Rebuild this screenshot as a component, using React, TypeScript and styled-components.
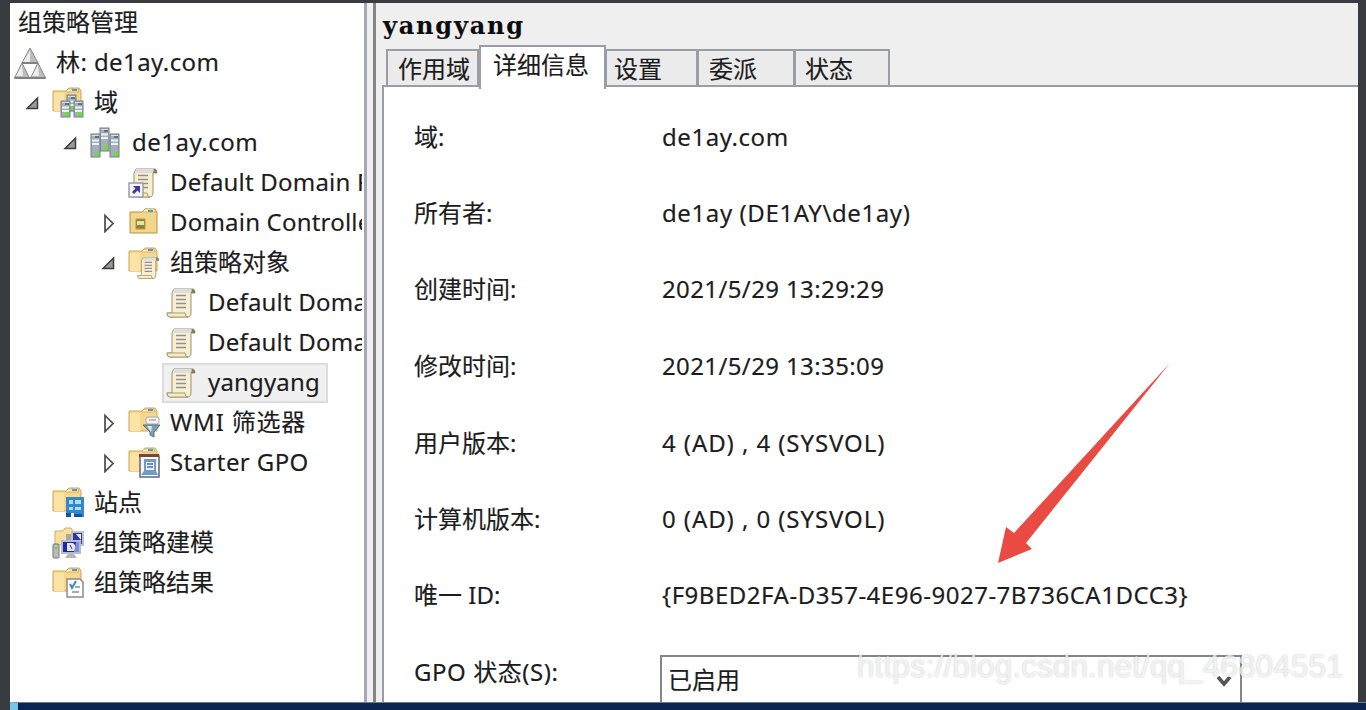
import React from 'react';
import styled, { createGlobalStyle } from 'styled-components';

const Global = createGlobalStyle`
  * { box-sizing: border-box; }
  body { margin: 0; overflow: hidden; background: #383b3f; }
`;

const Desktop = styled.div`
  width: 1366px;
  height: 710px;
  display: flex;
  flex-direction: column;
  padding-top: 3px;
  background: #383b3f;
  color: #1c1c20;
  font: 24px/40px 'Noto Sans', 'Noto Sans CJK SC', sans-serif;
  -webkit-text-stroke: 0.15px currentColor;
  white-space: nowrap;
`;

const Console = styled.main`
  display: flex;
  height: 699px;
  margin: 0 8px 0 10px;
  background: #efefef;
`;

const Taskbar = styled.footer`
  height: 8px;
  margin-left: 10px;
  background: #0a2552;
  border-left: 8px solid #7ac6e6;
  border-top: 1px solid #6f7b8f;
`;

const TreePane = styled.nav`
  width: 354px;
  background: #fff;
  border-right: 2px solid #fff;
  overflow: hidden;
`;

const Splitter = styled.div`
  width: 12px;
  border-left: 3px solid #a6a9b3;
  border-right: 3px solid #858585;
  background: #efefef;
`;

const TreeRow = styled.div<{ $level: number }>`
  height: 40px;
  display: flex;
  align-items: center;
  padding-left: ${p => Math.max(0, p.$level * 38 - 26)}px;
`;

const RootRow = styled.div`
  height: 40px;
  padding-left: 8px;
  line-height: 38px;
`;

const Twisty = styled.span`
  width: 26px;
  height: 20px;
  display: flex;
  flex: none;
`;

const Node = styled.span<{ $selected?: boolean }>`
  height: 40px;
  display: flex;
  align-items: center;
  padding: 0 6px 0 2px;
  border: 2px solid ${p => (p.$selected ? '#dcdcdc' : 'transparent')};
  background: ${p => (p.$selected ? '#f0f0f0' : 'transparent')};
`;

const NodeLabel = styled.span<{ $spacing?: number }>`
  margin-left: 10px;
  line-height: 34px;
  padding-bottom: 2px;
  letter-spacing: ${p => p.$spacing ?? 0}px;
`;

const Details = styled.section`
  flex: 1;
  min-width: 0;
  display: flex;
  flex-direction: column;
  padding-left: 6px;
`;

const Heading = styled.h1`
  height: 42px;
  margin: 0;
  padding-left: 1px;
  font: bold 24px/45px 'DejaVu Serif', serif;
  letter-spacing: 1.8px;
  color: #0c0c0c;
`;

const Tabs = styled.div`
  height: 42px;
  display: flex;
  align-items: flex-end;
  padding-left: 4px;
  position: relative;
  z-index: 1;
`;

const Tab = styled.div<{ $width: number; $active?: boolean; $pad: number }>`
  width: ${p => p.$width}px;
  height: ${p => (p.$active ? 44 : 36)}px;
  margin-bottom: ${p => (p.$active ? -2 : 2)}px;
  padding-left: ${p => p.$pad}px;
  border: 2px solid #9b9da5;
  border-bottom: 0;
  border-left-width: ${p => (p.$active || p.$width === 93 ? 2 : 1)}px;
  background: ${p => (p.$active ? '#fff' : '#ebebeb')};
  line-height: 36px;
`;

const TabPage = styled.div`
  flex: 1;
  margin-top: -2px;
  border: solid #9b9da5;
  border-width: 2px 0 0 2px;
  background: #fff;
  padding: 12px 0 0 30px;
  overflow: hidden;
`;

const Field = styled.div<{ $height: number }>`
  height: ${p => p.$height}px;
  display: grid;
  grid-template-columns: 248px 1fr;
  line-height: 75px;
`;

const Text = styled.span<{ $spacing?: number }>`
  letter-spacing: ${p => p.$spacing ?? 0}px;
`;

const Select = styled.div`
  width: 582px;
  height: 60px;
  margin: 21px 0 0 -2px;
  padding: 0 7px 0 6px;
  border: 2px solid #868686;
  display: flex;
  justify-content: space-between;
  line-height: 46px;
`;

const Chevron = styled.svg`
  margin-top: 15px;
`;

const Arrow = styled.svg`
  position: absolute;
  left: 990px;
  top: 355px;
`;

const Watermark = styled.div`
  position: absolute;
  left: 857px;
  top: 646px;
  font: 31.5px/40px 'Liberation Sans', sans-serif;
  letter-spacing: 0.1px;
  -webkit-text-stroke: 0;
  color: rgba(255, 255, 255, 0.72);
  text-shadow: 0 0 2px rgba(0, 0, 0, 0.24);
`;

const Svg = ({ children }: { children: React.ReactNode }) => (
  <svg width="32" height="32" viewBox="0 0 32 32">{children}</svg>
);

const Folder = () => (
  <g>
    <path d="M1 4h13l3-3h10l2 3v20H1z" fill="#f5d88c" stroke="#cfa557" />
    <path d="M2 6h10v18H2z" fill="#fae3a4" />
    <path d="M14 4l2-2h10l1 3H14z" fill="#fcefcb" stroke="#d9b365" />
    <path d="M20 3h5" stroke="#4e9ad4" strokeWidth="2" />
  </g>
);

const Tower = ({ x, y, h = 18 }: { x: number; y: number; h?: number }) => (
  <g>
    <rect x={x} y={y} width="9" height={h} fill="#a4afb9" stroke="#71808c" />
    <path d={`M${x + 1} ${y + 1.5}h7`} stroke="#d9e1e7" />
    <path d={`M${x + 4} ${y + 3}h4`} stroke="#27333d" />
    <path d={`M${x + 1} ${y + 6.5}h7M${x + 1} ${y + 10}h7`} stroke="#edf2f5" strokeWidth="2" />
    <rect x={x + 4} y={y + h - 5} width="4" height="4" fill="#6be22a" />
  </g>
);

const Scroll = () => (
  <g>
    <path d="M8 2h19q2 0 2 4h-4v19q0 5-3 5H4q-3 0-3-4h5V6z" fill="#f8efcd" stroke="#98917d" />
    <path d="M8 2h17v4H7z" fill="#dedddb" />
    <path d="M26 2q3 0 3 4h-4z" fill="#8c7b50" />
    <path d="M1 26h18q0 4 3 4H4q-3 0-3-4z" fill="#f7edbd" stroke="#a49b7b" />
    <path d="M10 8.500h10M10 12.500h10M10 16.500h10M10 20.500h10" stroke="#928d9d" strokeWidth="1.600" />
  </g>
);

type IconName = 'forest' | 'domains' | 'domain' | 'link' | 'ou' | 'objects' | 'gpo' | 'wmi' | 'starter' | 'sites' | 'modeling' | 'results';

const icons: Record<IconName, React.ReactNode> = {
  forest: (
    <g stroke="#858585" strokeWidth="1">
      <path d="M16 1l8 15H8zM8 16l7.500 15H.5zM24 16l7.500 15h-15z" fill="#bdbdbd" />
      <path d="M16 3l-7 12h7zM8 18L2 29h7zM24 18l-6 11h7z" fill="#ececec" stroke="none" />
      <path d="M8 16h16M.5 31h31" stroke="#808080" strokeWidth="2" />
    </g>
  ),
  domains: <><Folder /><Tower x={15} y={8} h={16} /><Tower x={9} y={14} h={16} /><Tower x={22} y={14} h={16} /></>,
  domain: <><Tower x={10} y={1} h={23} /><Tower x={1} y={7} h={23} /><Tower x={20} y={7} h={23} /></>,
  link: (
    <>
      <Scroll />
      <path d="M1 16h14v14H1z" fill="#f5f5fb" stroke="#9d9da9" strokeWidth="1.500" />
      <path d="M5 19h7v7l-2.500-2.500L6 27l-2-2 3.500-3.500z" fill="#3c3996" />
    </>
  ),
  ou: (
    <>
      <path d="M2 5h12l3-3h10l2 3v21H2z" fill="#f3d68b" stroke="#b8923e" />
      <path d="M15 4l2-2h9l2 3H15z" fill="#fff2cd" stroke="#d9b365" />
      <path d="M20 4h5" stroke="#4e9ad4" strokeWidth="2" />
      <rect x="8" y="12" width="9" height="10" fill="#8c8134" stroke="#b89c45" />
      <path d="M9 14h7v4H9z" fill="#e3e2a7" />
    </>
  ),
  objects: <><Folder /><g transform="translate(9 9) scale(.75)"><Scroll /></g></>,
  gpo: <Scroll />,
  wmi: (
    <>
      <Folder />
      <rect x="18" y="10" width="13" height="7" rx="2" fill="#f3f3f3" stroke="#aaa" />
      <path d="M21 13h7" stroke="#b08078" />
      <path d="M15 18h17l-6 7v5l-4-2v-3z" fill="#7f9fb9" stroke="#54708a" />
      <path d="M19 19h5l-1 6z" fill="#dbe9f2" />
    </>
  ),
  starter: (
    <>
      <Folder />
      <rect x="12" y="9" width="19" height="21" fill="#f4f6f8" stroke="#606872" strokeWidth="1.500" />
      <path d="M11 8.500h20" stroke="#7c4436" strokeWidth="3" />
      <path d="M16 12h12v12l2 4H13l3-4z" fill="#7299c8" />
      <path d="M18 15h8v8h-8z" fill="#e8f2fc" />
      <path d="M19 17h6M19 20h6" stroke="#456fa9" strokeWidth="1.500" />
    </>
  ),
  sites: (
    <>
      <Folder />
      <path d="M14 10h18v20H14z" fill="#3588c8" />
      <path d="M17 13h4v4h-4zM23 13h6v4h-6zM17 20h4v3h-4zM23 20h6v3h-6z" fill="#a9dcf5" />
      <path d="M14 26h5v4h-5zM22 27h8v3h-8z" fill="#1150aa" />
      <path d="M19 26h3v4h-3z" fill="#f4f9fd" />
    </>
  ),
  modeling: (
    <>
      <path d="M3 4h8l2-3h6l2 3v14H3z" fill="#f7df9c" stroke="#d1ae61" />
      <path d="M20 5h11v13H20z" fill="#2e3aa2" stroke="#bfc2ca" strokeWidth="2" />
      <path d="M24 7l5 6v-6z" fill="#e8ecfa" />
      <path d="M14 7h5v8h-5z" fill="#a7aaa3" />
      <path d="M10 14h18v12H10z" fill="#1b27ad" stroke="#b8bcc8" strokeWidth="2" />
      <path d="M15 16h6l2 2v6h-8z" fill="#e5e7ee" />
      <path d="M18 18l2 4" stroke="#30364d" fill="none" />
      <path d="M24 15h3v10h-5z" fill="#7d8be0" />
      <path d="M16 27h6l3 4H13z" fill="#b6b6b6" />
      <rect x="1" y="17" width="6" height="14" rx="1" fill="#b9bbb9" stroke="#777" />
      <path d="M2.500 21h3" stroke="#72d52c" strokeWidth="2" />
    </>
  ),
  results: (
    <>
      <Folder />
      <path d="M15 12h13l3 3v15H15z" fill="#fff" stroke="#8a8a8a" strokeWidth="1.500" />
      <path d="M18 17l2 4 4-7" fill="none" stroke="#3787c4" strokeWidth="2" />
      <path d="M23 20h5M20 25h7" stroke="#8c8c98" strokeWidth="1.500" />
    </>
  ),
};

type Item = { label: string; level: number; icon: IconName; state?: 'open' | 'closed'; selected?: boolean; spacing?: number };

const items: Item[] = [
  { label: '林: de1ay.com', level: 0, icon: 'forest', spacing: 0.42 },
  { label: '域', level: 1, icon: 'domains', state: 'open' },
  { label: 'de1ay.com', level: 2, icon: 'domain', state: 'open', spacing: 0.5 },
  { label: 'Default Domain Policy', level: 3, icon: 'link', spacing: 0.2 },
  { label: 'Domain Controllers', level: 3, icon: 'ou', state: 'closed', spacing: 0.2 },
  { label: '组策略对象', level: 3, icon: 'objects', state: 'open' },
  { label: 'Default Domain Controllers Policy', level: 4, icon: 'gpo', spacing: 0.2 },
  { label: 'Default Domain Policy', level: 4, icon: 'gpo', spacing: 0.2 },
  { label: 'yangyang', level: 4, icon: 'gpo', selected: true, spacing: 0.15 },
  { label: 'WMI 筛选器', level: 3, icon: 'wmi', state: 'closed', spacing: 0.8 },
  { label: 'Starter GPO', level: 3, icon: 'starter', state: 'closed', spacing: 0.4 },
  { label: '站点', level: 1, icon: 'sites' },
  { label: '组策略建模', level: 1, icon: 'modeling' },
  { label: '组策略结果', level: 1, icon: 'results' },
];

const fields: [string, string, number, number][] = [
  ['域:', 'de1ay.com', 76, 0.55],
  ['所有者:', 'de1ay (DE1AY\\de1ay)', 76, 0.6],
  ['创建时间:', '2021/5/29 13:29:29', 77, 0.38],
  ['修改时间:', '2021/5/29 13:35:09', 77, 0.38],
  ['用户版本:', '4 (AD) , 4 (SYSVOL)', 76, 0.92],
  ['计算机版本:', '0 (AD) , 0 (SYSVOL)', 76, 0.92],
  ['唯一 ID:', '{F9BED2FA-D357-4E96-9027-7B736CA1DCC3}', 77, 0.51],
];

export default function App() {
  return (
    <Desktop>
      <Global />
      <Console>
        <TreePane>
          <RootRow>组策略管理</RootRow>
          {items.map((item, i) => (
            <TreeRow key={i} $level={item.level}>
              {item.level > 0 && (
                <Twisty>
                  {item.state && (
                    <svg width="20" height="20" viewBox="0 0 20 20">
                      {item.state === 'open'
                        ? <path d="M15.500 5v10.500h-10.500z" fill="#999" stroke="#3c3c3c" strokeWidth="1.500" />
                        : <path d="M7 2.500v16l8-8z" fill="#fff" stroke="#4b4b4b" strokeWidth="1.700" />}
                    </svg>
                  )}
                </Twisty>
              )}
              <Node $selected={item.selected}>
                <Svg>{icons[item.icon]}</Svg>
                <NodeLabel $spacing={item.spacing}>{item.label}</NodeLabel>
              </Node>
            </TreeRow>
          ))}
        </TreePane>
        <Splitter />
        <Details>
          <Heading>yangyang</Heading>
          <Tabs>
            <Tab $width={93} $pad={10}>作用域</Tab>
            <Tab $width={127} $pad={12} $active>详细信息</Tab>
            <Tab $width={92} $pad={7}>设置</Tab>
            <Tab $width={97} $pad={10}>委派</Tab>
            <Tab $width={95} $pad={9}>状态</Tab>
          </Tabs>
          <TabPage>
            {fields.map(([label, value, height, spacing]) => (
              <Field key={label} $height={height}>
                <Text>{label}</Text>
                <Text $spacing={spacing}>{value}</Text>
              </Field>
            ))}
            <Field $height={80}>
              <Text $spacing={0.55}>GPO 状态(S):</Text>
              <Select>
                <Text>已启用</Text>
                <Chevron width="18" height="18" viewBox="0 0 18 18">
                  <path d="M3 5l6 7 6-7" fill="none" stroke="#555" strokeWidth="3.500" />
                </Chevron>
              </Select>
            </Field>
          </TabPage>
        </Details>
      </Console>
      <Taskbar />
      <Arrow width="190" height="215" viewBox="0 0 190 215">
        <path d="M180 8L24 178l-8-6-8 36 34-14-6-6z" fill="#e94b43" />
      </Arrow>
      <Watermark>https://blog.csdn.net/qq_46804551</Watermark>
    </Desktop>
  );
}
